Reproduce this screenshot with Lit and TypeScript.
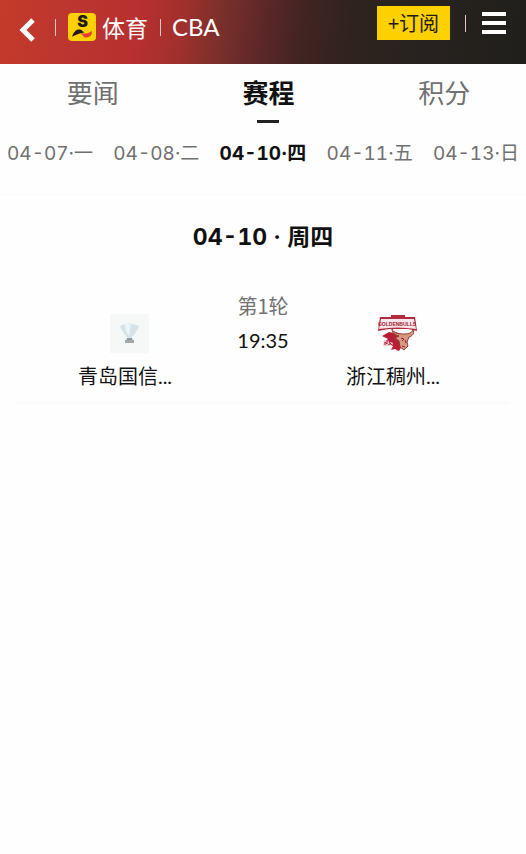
import { LitElement, html, css, svg } from "lit";
import { customElement, state } from "lit/decorators.js";
import { classMap } from "lit/directives/class-map.js";

const TABS = ["要闻", "赛程", "积分"];
const DATES = ["04-07·一", "04-08·二", "04-10·四", "04-11·五", "04-13·日"];

const backIcon = svg`<path d="M17 2 L7 12 L17 22" fill="none" stroke="#fff" stroke-width="5"/>`;

const brandIcon = html`<svg class="brand-icon" viewBox="0 0 28 28" aria-hidden="true">
  <rect width="28" height="28" rx="4" fill="#fdd000" />
  <text class="brand-letter" x="14.500" y="14">S</text>
  <path d="M4 23.800 C5.600 18.400 9 15.700 12 16.600 C14 17.200 15 18.700 16.400 19.600 C12 20 8.500 21.800 4 23.800Z" fill="#211a17" />
  <path d="M12.600 20.400 C15 20 16.500 20.700 18.200 20.600 C20.600 20.400 22.200 19.200 23.600 17.800 C24.800 21.400 22.200 24.300 18.600 24.500 C15.800 24.600 15 21.800 12.600 20.400Z" fill="#e73c38" />
</svg>`;

const trophyIcon = html`<svg class="crest" viewBox="0 0 39 39" role="img" aria-label="青岛国信">
  <rect width="39" height="39" fill="#f6f8f8" />
  <path d="M10 12 Q19.500 7 29 12 Q27 18 21 24 V26 H18 V24 Q12 18 10 12Z" fill="#d6e2e7" />
  <path d="M15 11 Q17 9 21 10 L19 22 Q15 17 15 11Z" fill="#eef4f6" />
  <path d="M17 24 H22 L23 27 H16Z" fill="#939ba0" />
  <rect x="15" y="26" width="9" height="3" fill="#a3a8ab" />
</svg>`;

const bullsIcon = html`<svg class="crest" viewBox="0 0 39 39" role="img" aria-label="浙江稠州">
  <path d="M13 1 H27 V3 H37 L39 17 L30 15 H11 L0 17 L2 3 H13Z" fill="#b52b3e" />
  <path d="M3 5 H36 L38 15 Q19 12 1 15Z" fill="#f6e6e8" />
  <text class="crest-name" x="19" y="12">GOLDENBULLS</text>
  <path d="M4 22 L11 18 L16 19 L14 17 L24 20 L27 27 L21 37 L17 35 L13 36 L15 32 L9 31 L12 29 L6 28 L10 25Z" fill="#b71f38" />
  <path d="M14 15 C16 20 22 20 26 20 C31 20 34 19 35 15 C37 20 34 22 31 23 L29 28 L30 32 L26 36 L22 33 L21 27 L17 24 L21 22 C17 21 14 19 14 15Z" fill="#d79a80" stroke="#8f3b35" stroke-width="1" />
  <path d="M23 24 L26 25 L24 27 M27 26 L28 29 M24 32 L27 33" fill="none" stroke="#8c242e" stroke-width="1" />
  <path d="M6 26 L11 27 L10 32 H5Z M12 28 L15 29 L14 32 H11Z" fill="#efc8cd" />
  <path d="M7 31 V28 L9 30 V27 M12 31 V29 L14 31" fill="none" stroke="#a82238" stroke-width="1" />
  <path d="M17 31 L21 33 L19 37Z" fill="#c7192f" />
</svg>`;

@customElement("app-root")
export class AppRoot extends LitElement {
  @state() private tab = 1;
  @state() private date = 2;

  static styles = css`
    :host {
      display: block;
      min-height: 100vh;
      overflow-x: clip;
      background: #fefefe;
      color: #111;
      font-family: "Noto Sans CJK SC", sans-serif;
    }
    button {
      border: 0;
      padding: 0;
      margin: 0;
      background: none;
      color: inherit;
      font: inherit;
      white-space: nowrap;
      cursor: pointer;
    }
    a {
      color: inherit;
      text-decoration: none;
    }
    svg {
      display: block;
      overflow: visible;
    }
    .top {
      display: flex;
      align-items: center;
      height: 64px;
      box-sizing: border-box;
      padding: 0 20px 10px 16px;
      color: #fff;
      background: linear-gradient(97deg, #c43b29 0%, #bd3630 12%, #b8302f 26%, #a3302d 34%, #7a302c 42%, #5c2729 50%, #3f2422 58%, #30231d 66%, #292320 76%, #201f1b 100%);
    }
    .back {
      margin: 6px 19px 0 0;
    }
    .back svg {
      width: 20px;
      height: 24px;
    }
    .bar {
      width: 1px;
      height: 17px;
      background: #e5c7c3;
    }
    .brand {
      display: flex;
      align-items: center;
      gap: 6px;
      margin: 0 12px;
      font-size: 23px;
      line-height: 32px;
    }
    .brand-icon {
      width: 28px;
      height: 28px;
    }
    .brand-letter {
      font: 900 16px Inter, sans-serif;
      fill: #211a17;
      text-anchor: middle;
    }
    .league {
      margin-left: 11px;
      font: 24px/32px Lato, sans-serif;
    }
    .subscribe {
      margin: 0 15px 9px auto;
      width: 73px;
      height: 34px;
      background: #fdd000;
      color: #211a17;
      font-size: 20px;
      line-height: 32px;
    }
    .actions-bar {
      margin-bottom: 8px;
    }
    .menu {
      display: grid;
      gap: 5px;
      width: 24px;
      margin: 0 0 8px 16px;
    }
    .menu span {
      height: 4px;
      background: #fff;
    }
    .tabs {
      display: grid;
      grid-template-columns: repeat(3, 1fr);
      margin: 0 -6px 0 5px;
      padding-top: 8px;
    }
    .tab {
      display: grid;
      justify-items: center;
      gap: 8px;
      color: #707070;
      font-size: 26px;
      line-height: 40px;
    }
    .tab::after {
      content: "";
      width: 22px;
      height: 3px;
    }
    .tab.on {
      color: #111;
      font-weight: 700;
    }
    .tab.on::after {
      background: #222;
    }
    .dates {
      display: flex;
      justify-content: space-between;
      padding: 15px 7px 24px;
      font-family: Inter, "Noto Sans CJK SC", sans-serif;
      font-size: 19px;
      font-variant-numeric: tabular-nums;
      line-height: 32px;
      color: #707070;
      border-bottom: 1px solid #fafafa;
    }
    .dates .on {
      color: #111;
      font-weight: 700;
    }
    h2 {
      margin: 0;
      padding: 26px 0 30px;
      text-align: center;
      font: 700 23px/32px Inter, "Noto Sans CJK SC", sans-serif;
      font-variant-numeric: tabular-nums;
    }
    .match {
      display: grid;
      grid-template-columns: 1fr 52px 1fr;
      margin: 0 16px;
      padding: 7px 5px 10px;
      border-bottom: 2px solid #fafafa;
      font-size: 20px;
    }
    .team {
      display: grid;
      justify-items: center;
      align-content: start;
      gap: 7px;
      padding: 24px 0 0;
      line-height: 32px;
      font-family: Lato, "Noto Sans CJK SC", sans-serif;
    }
    .team span {
      margin-right: 8px;
    }
    .crest {
      width: 39px;
      height: 39px;
    }
    .crest-name {
      font: 700 5px "Liberation Sans", sans-serif;
      fill: #9d1830;
      text-anchor: middle;
    }
    .info {
      text-align: center;
      white-space: nowrap;
      line-height: 32px;
    }
    .round {
      color: #707070;
    }
    .time {
      font-family: Lato, sans-serif;
      line-height: 36px;
    }
  `;

  render() {
    return html`
      <header class="top">
        <button class="back" aria-label="返回"><svg viewBox="0 0 20 24">${backIcon}</svg></button>
        <span class="bar"></span>
        <a class="brand" href="#sports">${brandIcon}<span>体育</span></a>
        <span class="bar"></span>
        <a class="league" href="#cba">CBA</a>
        <button class="subscribe">+订阅</button>
        <span class="bar actions-bar"></span>
        <button class="menu" aria-label="菜单"><span></span><span></span><span></span></button>
      </header>
      <nav class="tabs">
        ${TABS.map((t, i) => html`<button class=${classMap({ tab: true, on: i === this.tab })} @click=${() => (this.tab = i)}>${t}</button>`)}
      </nav>
      <nav class="dates">
        ${DATES.map((d, i) => html`<button class=${classMap({ on: i === this.date })} @click=${() => (this.date = i)}>${d}</button>`)}
      </nav>
      <main>
        <h2>04-10 · 周四</h2>
        <a class="match" href="#match">
          <div class="team">${trophyIcon}<span>青岛国信...</span></div>
          <div class="info">
            <div class="round">第1轮</div>
            <div class="time">19:35</div>
          </div>
          <div class="team">${bullsIcon}<span>浙江稠州...</span></div>
        </a>
      </main>
    `;
  }
}
